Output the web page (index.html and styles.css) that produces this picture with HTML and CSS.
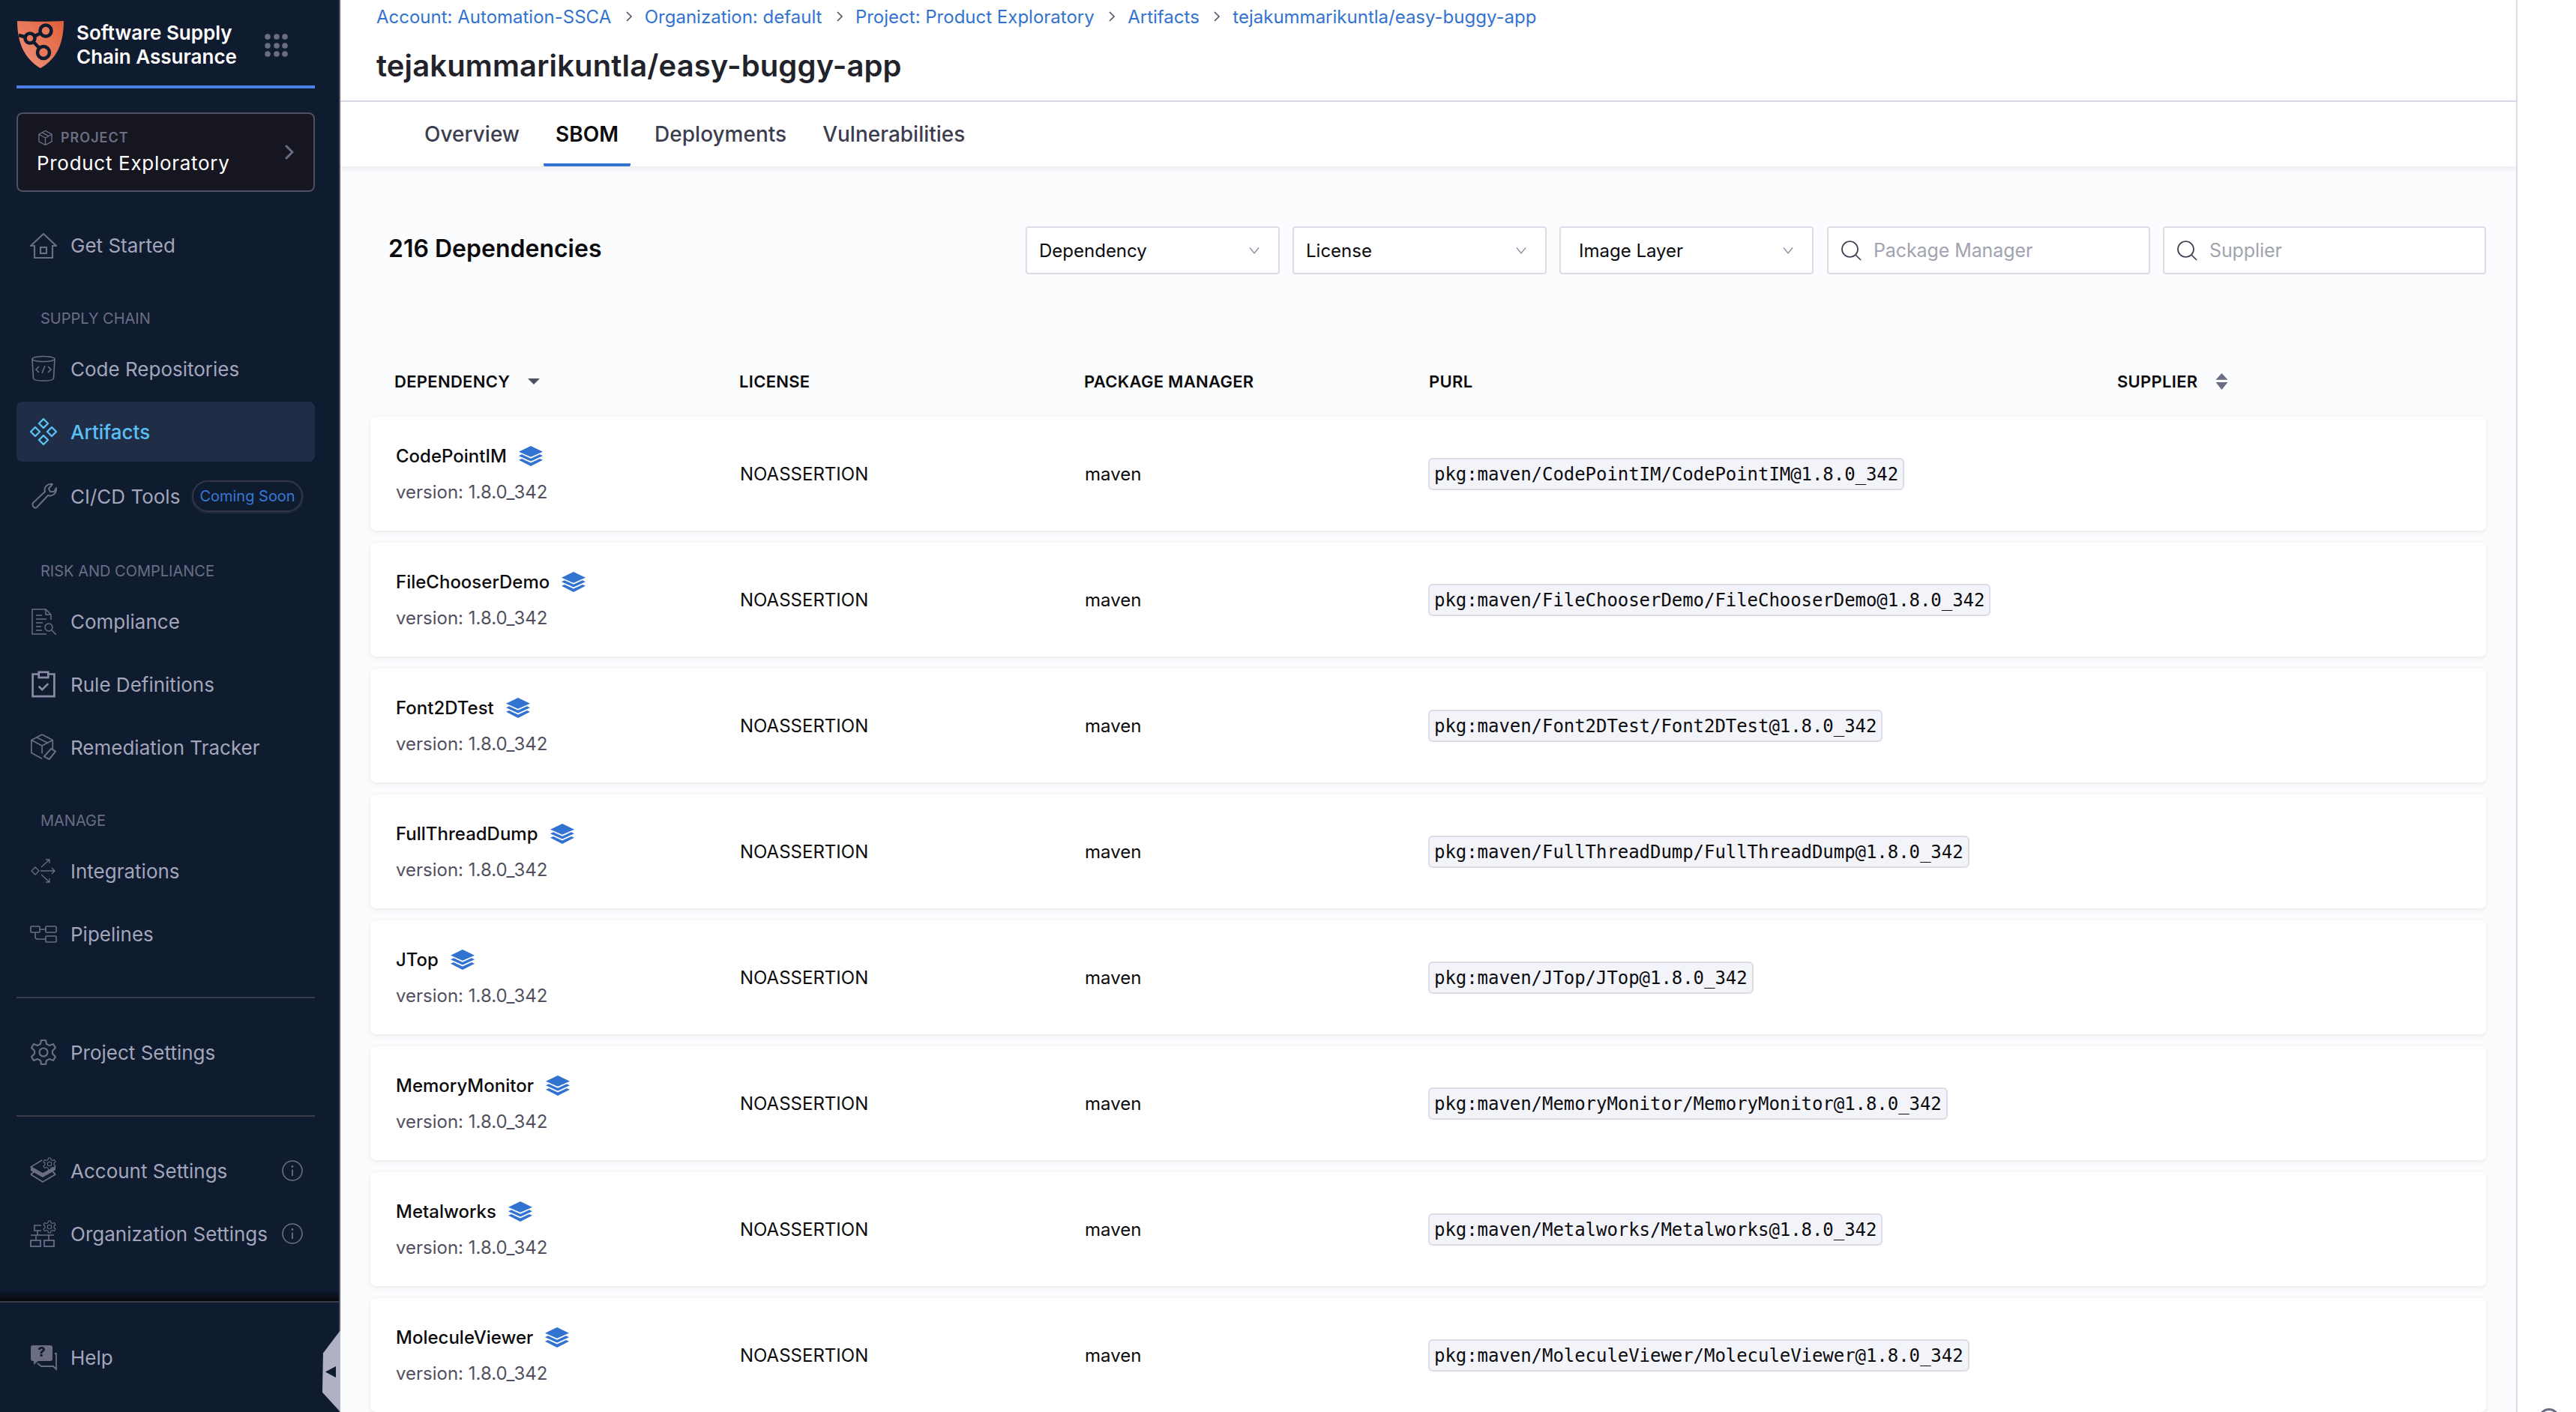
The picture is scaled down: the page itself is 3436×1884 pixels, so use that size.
FILE: index.html
```html
<!DOCTYPE html>
<html lang="en">
  <head>
    <meta charset="UTF-8" />
    <title>SBOM - tejakummarikuntla/easy-buggy-app</title>
    <link rel="stylesheet" href="styles.css">
  </head>
  <body>
    <svg class="sprite">
      <defs>
        <symbol id="layers" viewBox="0 0 32 30" preserveAspectRatio="none">
          <path d="M16 0 L32 8.5 L16 16.5 L0 8.5 Z" fill="#3273d1" />
          <path d="M4 12.5 L16 18.6 L28 12.5 L32 14.6 L16 22.8 L0 14.6 Z" fill="#3273d1" />
          <path d="M4 18.8 L16 24.9 L28 18.8 L32 20.9 L16 30 L0 20.9 Z" fill="#3273d1" />
        </symbol>
        <symbol id="chevron" viewBox="0 0 16 16">
          <path d="M2 4.5 L8 12 L14 4.5" fill="none" stroke="#8c8ea8" stroke-width="1.4" />
        </symbol>
        <symbol id="search" viewBox="0 0 28 28">
          <circle cx="12.5" cy="12.5" r="10.5" fill="none" stroke="#3c3e4f" stroke-width="1.7" />
          <path d="M20 20 L27 27" stroke="#3c3e4f" stroke-width="1.7" />
        </symbol>
        <symbol id="crumb" viewBox="0 0 12 16">
          <path d="M3 2 L9 8 L3 14" fill="none" stroke="#4f5162" stroke-width="1.6" />
        </symbol>
        <symbol id="info" viewBox="0 0 28 28">
          <circle cx="14" cy="14" r="13" fill="none" stroke="#6b6d85" stroke-width="1.6" />
          <circle cx="14" cy="8.5" r="1.4" fill="#6b6d85" />
          <path d="M14 12.5 V21" stroke="#6b6d85" stroke-width="1.8" />
        </symbol>
        <symbol id="gear" viewBox="0 0 36 36">
          <path d="M15 2 H21 L22 7 L26 9 L31 7 L34 12 L30 16 V20 L34 24 L31 29 L26 27 L22 29 L21 34 H15 L14 29 L10 27 L5 29 L2 24 L6 20 V16 L2 12 L5 7 L10 9 L14 7 Z" fill="none" stroke="currentColor" stroke-width="2.2" stroke-linejoin="round" />
          <circle cx="18" cy="18" r="5.5" fill="none" stroke="currentColor" stroke-width="2.2" />
        </symbol>
      </defs>
    </svg>

    <aside class="sidebar">
      <div class="sidebar-scroll">
        <div class="module">
          <svg class="module-logo" viewBox="0 0 62 64">
            <defs>
              <linearGradient id="shield" x1="0" y1="1" x2="1" y2="0">
                <stop offset="0" stop-color="#ef9580" />
                <stop offset="1" stop-color="#e05f38" />
              </linearGradient>
            </defs>
            <path d="M0 0 C20 1 42 1 62 0 C62 28 54 50 31 63 C9 50 0 28 0 0 Z" fill="url(#shield)" />
            <path d="M2 19 L17 23 L38 13 M17 23 L35 42" fill="none" stroke="#0f1b2e" stroke-width="4.5" />
            <circle cx="38" cy="13" r="7.5" fill="#e8795a" stroke="#0f1b2e" stroke-width="4.5" />
            <circle cx="17" cy="23" r="6.5" fill="#e8795a" stroke="#0f1b2e" stroke-width="4.5" />
            <circle cx="35" cy="42" r="8" fill="#e8795a" stroke="#0f1b2e" stroke-width="4.5" />
          </svg>
          <div class="module-name">Software Supply<br />Chain Assurance</div>
          <svg class="module-grid" viewBox="0 0 32 32">
            <circle cx="4" cy="4" r="3.8" /><circle cx="16" cy="4" r="3.8" /><circle cx="27" cy="4" r="3.8" />
            <circle cx="4" cy="16" r="3.8" /><circle cx="16" cy="16" r="3.8" /><circle cx="27" cy="16" r="3.8" />
            <circle cx="4" cy="27" r="3.8" /><circle cx="16" cy="27" r="3.8" /><circle cx="27" cy="27" r="3.8" />
          </svg>
        </div>

        <div class="project-box">
          <div class="project-text">
            <div class="project-label">
              <svg class="project-cube" viewBox="0 0 22 22">
                <path d="M11 1 L20 6 V16 L11 21 L2 16 V6 Z M2 6 L11 11 L20 6 M11 11 V21 M6.5 3.5 L15.5 8.5" fill="none" stroke="#6b6d85" stroke-width="1.4" />
              </svg>
              PROJECT
            </div>
            <div class="project-name">Product Exploratory</div>
          </div>
          <svg class="project-arrow" viewBox="0 0 12 20">
            <path d="M2 2 L10 10 L2 18" fill="none" stroke="#6b6d85" stroke-width="3" stroke-linecap="round" />
          </svg>
        </div>

        <a class="nav-item get-started">
          <svg class="nav-icon" viewBox="0 0 36 36">
            <path d="M1 19 L18 3 L35 19 H30 V35 H6 V19 Z" fill="none" stroke="#6b6d85" stroke-width="2.2" stroke-linejoin="round" />
            <rect x="14" y="21" width="8" height="8" fill="none" stroke="#6b6d85" stroke-width="2.2" />
          </svg>
          Get Started
        </a>

        <div class="nav-label">SUPPLY CHAIN</div>
        <a class="nav-item">
          <svg class="nav-icon" viewBox="0 0 36 36">
            <ellipse cx="18" cy="5" rx="15" ry="3.5" fill="none" stroke="#6b6d85" stroke-width="1.6" />
            <path d="M3 5 L4.5 31 C5 35 31 35 31.5 31 L33 5" fill="none" stroke="#6b6d85" stroke-width="1.6" />
            <path d="M12 15 L8 19 L12 23 M24 15 L28 19 L24 23 M20 14 L16 24" fill="none" stroke="#6b6d85" stroke-width="1.6" />
          </svg>
          Code Repositories
        </a>
        <a class="nav-item active">
          <svg class="nav-icon" viewBox="0 0 36 36">
            <path d="M18 1 L24 7 L18 13 L12 7 Z M7 12 L13 18 L7 24 L1 18 Z M29 12 L35 18 L29 24 L23 18 Z M18 23 L24 29 L18 35 L12 29 Z" fill="none" stroke="#5cc0f5" stroke-width="2.4" stroke-linejoin="round" />
          </svg>
          Artifacts
        </a>
        <a class="nav-item tools">
          <svg class="nav-icon" viewBox="0 0 36 36">
            <path d="M4 27 L20 12 C18 6 23 1 30 2 L25 8 L27 12 L32 12 L35 7 C36 14 30 19 24 17 L9 33 C6 35 2 31 4 27 Z" fill="none" stroke="#6b6d85" stroke-width="2" stroke-linejoin="round" />
          </svg>
          CI/CD Tools
          <span class="soon">Coming Soon</span>
        </a>

        <div class="nav-label">RISK AND COMPLIANCE</div>
        <a class="nav-item">
          <svg class="nav-icon" viewBox="0 0 36 36">
            <path d="M28 16 V9 L21 2 H3 V35 H22 M21 2 V9 H28 M8 10 H16 M8 15 H22 M8 20 H17 M8 25 H15 M8 30 H16" fill="none" stroke="#6b6d85" stroke-width="1.5" />
            <circle cx="25" cy="26" r="5" fill="none" stroke="#6b6d85" stroke-width="1.5" />
            <path d="M29 30 L35 36" stroke="#6b6d85" stroke-width="1.5" />
          </svg>
          Compliance
        </a>
        <a class="nav-item">
          <svg class="nav-icon" viewBox="0 0 36 40">
            <path d="M10 5 H2 V38 H34 V5 H26" fill="none" stroke="#8a8ca5" stroke-width="3" />
            <rect x="11" y="2" width="14" height="8" fill="none" stroke="#8a8ca5" stroke-width="3" />
            <path d="M11 23 L16 28 L25 19" fill="none" stroke="#8a8ca5" stroke-width="3" />
          </svg>
          Rule Definitions
        </a>
        <a class="nav-item">
          <svg class="nav-icon" viewBox="0 0 36 38">
            <path d="M16 1 L31 9 V21 M16 1 L1 9 V27 L16 35 M1 9 L16 17 L31 9 M16 17 V28 M8 5 L24 13" fill="none" stroke="#6b6d85" stroke-width="1.8" />
            <path d="M19 32 L29 21 L35 25 L26 36 Z" fill="none" stroke="#6b6d85" stroke-width="2.2" stroke-linejoin="round" />
          </svg>
          Remediation Tracker
        </a>

        <div class="nav-label">MANAGE</div>
        <a class="nav-item">
          <svg class="nav-icon" viewBox="0 0 36 36">
            <path d="M7 13 L12 18 L7 23 L2 18 Z M14 18 H33 M29 14 L33 18 L29 22 M15 13 L26 3 M21 3 H26 V8 M15 23 L26 33 M21 33 H26 V28" fill="none" stroke="#6b6d85" stroke-width="1.3" />
          </svg>
          Integrations
        </a>
        <a class="nav-item">
          <svg class="nav-icon" viewBox="0 0 36 24">
            <rect x="1" y="2" width="12" height="8" rx="1" fill="none" stroke="#6b6d85" stroke-width="1.6" />
            <rect x="21" y="2" width="14" height="8" rx="1" fill="none" stroke="#6b6d85" stroke-width="1.6" />
            <rect x="21" y="15" width="14" height="8" rx="1" fill="none" stroke="#6b6d85" stroke-width="1.6" />
            <path d="M13 6 H21 M7 10 V16 C7 18 8 19 10 19 H21" fill="none" stroke="#6b6d85" stroke-width="1.6" />
          </svg>
          Pipelines
        </a>

        <div class="nav-divider"></div>
        <a class="nav-item">
          <svg class="nav-icon gear"><use href="#gear" /></svg>
          Project Settings
        </a>

        <div class="nav-divider"></div>
        <a class="nav-item">
          <svg class="nav-icon" viewBox="0 0 36 36">
            <path d="M16 4 L1 13 L17 22 L34 13" fill="none" stroke="#6b6d85" stroke-width="1.6" />
            <path d="M1 13 L17 22 L34 13 V17 L17 27 L1 18 Z" fill="#6b6d85" />
            <path d="M1 23 L17 33 L34 23 M30 19 L34 23 M1 23 L5 20" fill="none" stroke="#6b6d85" stroke-width="1.8" />
            <svg x="17" y="0" width="18" height="18" viewBox="0 0 36 36" class="gear-small"><use href="#gear" /></svg>
          </svg>
          Account Settings
          <svg class="nav-info"><use href="#info" /></svg>
        </a>
        <a class="nav-item">
          <svg class="nav-icon" viewBox="0 0 36 36">
            <path d="M15 7 H6 V14 H15 M10 14 V20 M1 20 H32 M8 20 V27 M25 20 V27" fill="none" stroke="#6b6d85" stroke-width="1.6" />
            <rect x="1" y="27" width="13" height="8" fill="none" stroke="#6b6d85" stroke-width="1.8" />
            <rect x="19" y="27" width="13" height="8" fill="none" stroke="#6b6d85" stroke-width="1.8" />
            <svg x="17" y="0" width="18" height="18" viewBox="0 0 36 36" class="gear-small"><use href="#gear" /></svg>
          </svg>
          Organization Settings
          <svg class="nav-info"><use href="#info" /></svg>
        </a>
      </div>

      <div class="sidebar-foot">
        <a class="nav-item">
          <svg class="nav-icon" viewBox="0 0 36 34">
            <path d="M4 1 H27 C29 1 30 2 30 4 V19 C30 21 29 22 27 22 H11 L5 27 V22 H4 C2 22 1 21 1 19 V4 C1 2 2 1 4 1 Z" fill="#6b6d85" />
            <text x="15.5" y="16" class="help-mark">?</text>
            <path d="M33 12 H35 V31 M35 29 V33 L31 29 H15 L10 25" fill="none" stroke="#6b6d85" stroke-width="1.8" />
          </svg>
          Help
        </a>
      </div>
      <div class="collapse-tab"><span class="collapse-arrow"></span></div>
    </aside>

    <main class="main">
      <header class="page-head">
        <nav class="crumbs">
          <a>Account: Automation-SSCA</a>
          <svg class="crumb-sep"><use href="#crumb" /></svg>
          <a>Organization: default</a>
          <svg class="crumb-sep"><use href="#crumb" /></svg>
          <a>Project: Product Exploratory</a>
          <svg class="crumb-sep"><use href="#crumb" /></svg>
          <a>Artifacts</a>
          <svg class="crumb-sep"><use href="#crumb" /></svg>
          <a>tejakummarikuntla/easy-buggy-app</a>
        </nav>
        <h1>tejakummarikuntla/easy-buggy-app</h1>
      </header>

      <div class="tabs">
        <a class="tab">Overview</a>
        <a class="tab selected">SBOM</a>
        <a class="tab">Deployments</a>
        <a class="tab">Vulnerabilities</a>
      </div>

      <section class="content">
        <div class="toolbar">
          <h2>216 Dependencies</h2>
          <div class="filters">
            <div class="filter select">Dependency<svg><use href="#chevron" /></svg></div>
            <div class="filter select">License<svg><use href="#chevron" /></svg></div>
            <div class="filter select layer">Image Layer<svg><use href="#chevron" /></svg></div>
            <div class="filter field"><svg><use href="#search" /></svg>Package Manager</div>
            <div class="filter field"><svg><use href="#search" /></svg>Supplier</div>
          </div>
        </div>

        <div class="table-head">
          <div class="th">DEPENDENCY<span class="sort-down"></span></div>
          <div class="th">LICENSE</div>
          <div class="th">PACKAGE MANAGER</div>
          <div class="th">PURL</div>
          <div class="th supplier">SUPPLIER<span class="sort-both"></span></div>
        </div>

        <div class="row">
          <div class="dep">
            <div class="dep-name">CodePointIM<svg class="dep-layers"><use href="#layers" /></svg></div>
            <div class="dep-version">version: 1.8.0_342</div>
          </div>
          <div>NOASSERTION</div>
          <div>maven</div>
          <div><code>pkg:maven/CodePointIM/CodePointIM@1.8.0_342</code></div>
        </div>
        <div class="row">
          <div class="dep">
            <div class="dep-name">FileChooserDemo<svg class="dep-layers"><use href="#layers" /></svg></div>
            <div class="dep-version">version: 1.8.0_342</div>
          </div>
          <div>NOASSERTION</div>
          <div>maven</div>
          <div><code>pkg:maven/FileChooserDemo/FileChooserDemo@1.8.0_342</code></div>
        </div>
        <div class="row">
          <div class="dep">
            <div class="dep-name">Font2DTest<svg class="dep-layers"><use href="#layers" /></svg></div>
            <div class="dep-version">version: 1.8.0_342</div>
          </div>
          <div>NOASSERTION</div>
          <div>maven</div>
          <div><code>pkg:maven/Font2DTest/Font2DTest@1.8.0_342</code></div>
        </div>
        <div class="row">
          <div class="dep">
            <div class="dep-name">FullThreadDump<svg class="dep-layers"><use href="#layers" /></svg></div>
            <div class="dep-version">version: 1.8.0_342</div>
          </div>
          <div>NOASSERTION</div>
          <div>maven</div>
          <div><code>pkg:maven/FullThreadDump/FullThreadDump@1.8.0_342</code></div>
        </div>
        <div class="row">
          <div class="dep">
            <div class="dep-name">JTop<svg class="dep-layers"><use href="#layers" /></svg></div>
            <div class="dep-version">version: 1.8.0_342</div>
          </div>
          <div>NOASSERTION</div>
          <div>maven</div>
          <div><code>pkg:maven/JTop/JTop@1.8.0_342</code></div>
        </div>
        <div class="row">
          <div class="dep">
            <div class="dep-name">MemoryMonitor<svg class="dep-layers"><use href="#layers" /></svg></div>
            <div class="dep-version">version: 1.8.0_342</div>
          </div>
          <div>NOASSERTION</div>
          <div>maven</div>
          <div><code>pkg:maven/MemoryMonitor/MemoryMonitor@1.8.0_342</code></div>
        </div>
        <div class="row">
          <div class="dep">
            <div class="dep-name">Metalworks<svg class="dep-layers"><use href="#layers" /></svg></div>
            <div class="dep-version">version: 1.8.0_342</div>
          </div>
          <div>NOASSERTION</div>
          <div>maven</div>
          <div><code>pkg:maven/Metalworks/Metalworks@1.8.0_342</code></div>
        </div>
        <div class="row">
          <div class="dep">
            <div class="dep-name">MoleculeViewer<svg class="dep-layers"><use href="#layers" /></svg></div>
            <div class="dep-version">version: 1.8.0_342</div>
          </div>
          <div>NOASSERTION</div>
          <div>maven</div>
          <div><code>pkg:maven/MoleculeViewer/MoleculeViewer@1.8.0_342</code></div>
        </div>
      </section>
    </main>

    <div class="right-strip"><span class="strip-circle"></span></div>
  </body>
</html>
```

FILE: styles.css
```css
* {
  box-sizing: border-box;
}
html,
body {
  height: 100%;
}
body {
  margin: 0;
  display: flex;
  height: 1884px;
  overflow: hidden;
  font-family: Inter, "Noto Sans", sans-serif;
  font-size: 24px;
  color: #0b0b0d;
  background: white;
}
.sprite {
  position: absolute;
  width: 0;
  height: 0;
}

/* sidebar */
.sidebar {
  position: relative;
  flex: 0 0 454px;
  height: 1884px;
  display: flex;
  flex-direction: column;
  background: #0f1b2e;
  border-right: 2px solid #4f5162;
}
.sidebar-scroll {
  height: 1736px;
  padding: 0 32px 0 22px;
  background: linear-gradient(to bottom, transparent 1722px, #05070c 1736px);
}
.sidebar-foot {
  height: 148px;
  padding: 33px 32px 0 22px;
  border-top: 2px solid #3b3c4c;
}
.module {
  height: 118px;
  padding: 28px 0 0 1px;
  display: flex;
  align-items: flex-start;
  border-bottom: 4px solid #4a80e8;
}
.module-logo {
  width: 62px;
  height: 64px;
}
.module-name {
  margin: 0 0 0 17px;
  font-size: 26px;
  line-height: 32px;
  font-weight: 600;
  color: white;
  width: 251px;
}
.module-grid {
  width: 32px;
  height: 32px;
  margin-top: 17px;
  fill: #6b6d85;
}
.project-box {
  height: 106px;
  margin-top: 32px;
  padding: 0 26px 0 25px;
  display: flex;
  align-items: center;
  justify-content: space-between;
  background: #15161f;
  border: 2px solid #4f5162;
  border-radius: 8px;
}
.project-label {
  display: flex;
  align-items: center;
  gap: 10px;
  margin-bottom: 6px;
  padding-left: 1px;
  font-size: 18px;
  line-height: 24px;
  font-weight: 600;
  letter-spacing: 1px;
  color: #6b6d85;
}
.project-cube {
  width: 21px;
  height: 22px;
}
.project-name {
  font-size: 26px;
  line-height: 32px;
  font-weight: 400;
  letter-spacing: 0.7px;
  color: white;
}
.project-arrow {
  width: 12px;
  height: 20px;
}
.nav-item {
  display: flex;
  align-items: center;
  height: 80px;
  margin-bottom: 4px;
  padding-left: 18px;
  border-radius: 8px;
  font-size: 26px;
  color: #a3a5bc;
  white-space: nowrap;
}
.nav-item.get-started {
  margin-top: 31px;
}
.nav-item.active {
  background: #1f2d47;
  color: #5cc0f5;
  font-weight: 500;
}
.nav-item.tools {
  height: 84px;
}
.nav-icon {
  flex: 0 0 36px;
  width: 36px;
  height: 36px;
  margin-right: 18px;
}
.nav-icon.gear {
  color: #6b6d85;
}
.gear-small {
  color: #6b6d85;
}
.help-mark {
  font-size: 18px;
  font-weight: 800;
  text-anchor: middle;
  fill: #0f1b2e;
}
.nav-label {
  height: 81px;
  padding: 42px 0 0 32px;
  font-size: 20px;
  line-height: 24px;
  color: #6b6d85;
}
.nav-divider {
  height: 2px;
  margin: 44px 0 32px;
  background: #3b3c4c;
}
.nav-info {
  width: 28px;
  height: 28px;
  position: absolute;
  left: 376px;
}
.soon {
  margin-left: 16px;
  padding: 0 8px;
  height: 42px;
  line-height: 38px;
  font-size: 20px;
  color: #3579d6;
  border: 2px solid #33364a;
  border-radius: 21px;
  box-shadow: 0 1px 3px rgba(120, 122, 150, 0.3);
}
.collapse-tab {
  position: absolute;
  right: -2px;
  bottom: 0;
  width: 24px;
  height: 109px;
  background: #b0b1c4;
  clip-path: polygon(100% 0, 4% 28%, 0 76%, 100% 100%);
}
.collapse-arrow {
  position: absolute;
  left: 4px;
  top: 48px;
  width: 14px;
  height: 15px;
  background: #0f1b2e;
  clip-path: polygon(100% 0, 0 50%, 100% 100%);
}

/* page head */
.main {
  flex: 0 0 2902px;
  height: 1884px;
  overflow: hidden;
  background: #fbfcfe;
}
.page-head {
  height: 136px;
  padding: 6px 0 0 48px;
  background: white;
  border-bottom: 2px solid #dcdce8;
}
.crumbs {
  display: flex;
  align-items: center;
  height: 32px;
  color: #3273d1;
  white-space: nowrap;
}
.crumb-sep {
  width: 12px;
  height: 16px;
  margin: 0 15px 0 17.5px;
}
h1 {
  margin: 22px 0 0;
  font-size: 40px;
  line-height: 56px;
  font-weight: 600;
  letter-spacing: 0.12px;
  color: #22222a;
}
.tabs {
  position: relative;
  display: flex;
  gap: 16px;
  height: 86px;
  padding-left: 96px;
  background: white;
  box-shadow: 0 2px 8px rgba(96, 97, 112, 0.14);
}
.tab {
  padding: 24px 16px 0;
  font-size: 28px;
  line-height: 38px;
  font-weight: 500;
  color: #3c3e4f;
}
.tab.selected {
  font-weight: 600;
  color: #0b0b0d;
  border-bottom: 4px solid #3273d1;
  border-radius: 0 0 2px 2px;
}

/* sbom list */
.content {
  padding: 80px 40px 0;
}
.toolbar {
  display: flex;
  justify-content: space-between;
  align-items: flex-start;
  height: 64px;
}
h2 {
  margin: 2px 0 0 24px;
  font-size: 32px;
  line-height: 56px;
  font-weight: 600;
}
.filters {
  display: flex;
  gap: 17px;
}
.filter {
  display: flex;
  align-items: center;
  justify-content: space-between;
  width: 339px;
  height: 64px;
  padding: 0 24px 0 16px;
  background: white;
  border: 2px solid #dcdce8;
  border-radius: 4px;
}
.filter svg {
  width: 16px;
  height: 16px;
}
.filter.layer {
  margin-right: 1px;
  padding-left: 24px;
}
.filter.field {
  justify-content: flex-start;
  width: 431px;
  padding-left: 16px;
  font-size: 25px;
  color: #a0a4b0;
  letter-spacing: -0.1px;
}
.filter.field svg {
  width: 28px;
  height: 28px;
  margin-right: 16px;
}
.table-head,
.row {
  display: grid;
  grid-template-columns: 460px 460px 460px 920px 1fr;
  align-items: center;
}
.table-head {
  height: 190px;
  padding: 128px 0 0 32px;
}
.table-head .th {
  display: flex;
  align-items: center;
  align-self: start;
  height: 30px;
  font-size: 22px;
  font-weight: 600;
  letter-spacing: 0.3px;
}
.th.supplier {
  margin-left: -2px;
}
.sort-down {
  margin-left: 24px;
  border-top: 8px solid #4f5162;
  border-left: 8px solid transparent;
  border-right: 8px solid transparent;
}
.sort-both {
  position: relative;
  width: 16px;
  height: 22px;
  margin-left: 24px;
  background: #6b6d85;
  clip-path: polygon(50% 0, 100% 40%, 0 40%, 0 55%, 100% 55%, 50% 100%, 50% 100%, 0 55%, 0 40%);
}
.row {
  height: 152px;
  margin-bottom: 16px;
  padding-left: 33px;
  background: white;
  border-radius: 8px;
  box-shadow: 0 2px 6px rgba(96, 97, 112, 0.13);
}
.dep {
  padding-left: 1px;
}
.dep-name {
  display: flex;
  align-items: center;
  height: 32px;
  font-weight: 500;
}
.dep-layers {
  width: 32px;
  height: 27px;
  margin-left: 16px;
}
.dep-version {
  margin-top: 18px;
  line-height: 30px;
  color: #4f5162;
}
code {
  display: inline-block;
  height: 43px;
  margin-left: -2px;
  padding: 0 6px;
  font-family: "DejaVu Sans Mono", monospace;
  font-size: 24px;
  line-height: 40px;
  letter-spacing: -0.05px;
  background: #f3f3fa;
  border: 2px solid #dcdce8;
  border-radius: 6px;
  white-space: nowrap;
}

/* right edge */
.right-strip {
  position: relative;
  flex: 1;
  border-left: 2px solid #dcdce8;
}
.strip-circle {
  position: absolute;
  left: 28px;
  top: 1879px;
  width: 28px;
  height: 28px;
  border: 3px solid #6b6d85;
  border-radius: 50%;
}
```
